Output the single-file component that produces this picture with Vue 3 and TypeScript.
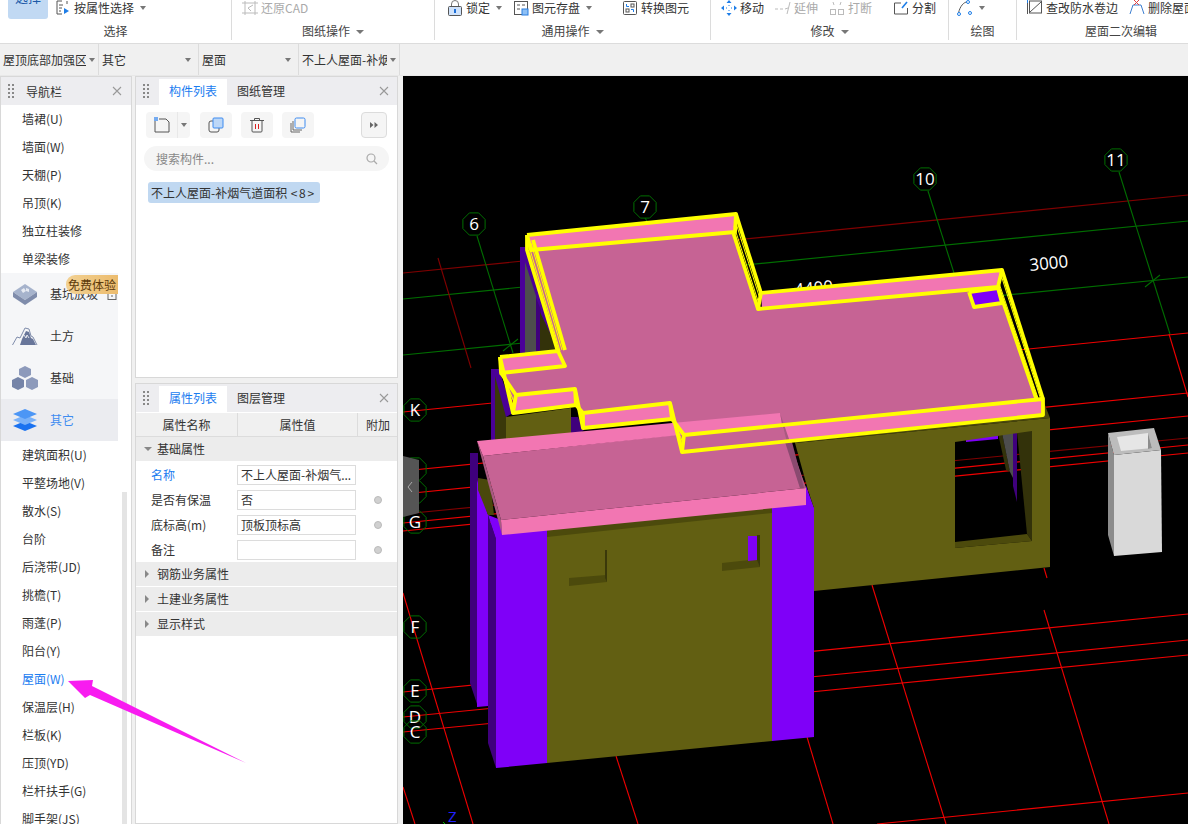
<script setup lang="ts">
interface Face { pts: string; fill: string }
interface Seg { p: number[]; c: string }
interface Axis { x: number; y: number; t: string }

const RED = '#f00000'
const DARK = '#800000'
const GREEN = '#006e00'

const lines: Seg[] = [
  { p: [403, 273, 1188, 195], c: DARK },
  { p: [403, 299, 1188, 221], c: GREEN },
  { p: [403, 355, 1188, 277], c: GREEN },
  { p: [403, 412, 1188, 333], c: RED },
  { p: [403, 471, 1188, 393], c: RED },
  { p: [403, 494, 1188, 416], c: RED },
  { p: [403, 514, 1188, 438], c: DARK },
  { p: [403, 523, 1188, 445], c: RED },
  { p: [403, 531, 1188, 453], c: RED },
  { p: [403, 692, 1188, 614], c: RED },
  { p: [403, 717, 1188, 640], c: RED },
  { p: [403, 732, 1188, 655], c: RED },
  { p: [877, 824, 1188, 793], c: RED },
  { p: [403, 593, 473, 824], c: RED },
  { p: [403, 787, 415, 824], c: RED },
  { p: [616, 756, 638, 824], c: RED },
  { p: [807, 737, 833, 824], c: RED },
  { p: [872, 585, 946, 824], c: RED },
  { p: [1044, 568, 1047, 578], c: RED },
  { p: [1044, 610, 1109, 824], c: RED },
  { p: [1169, 334, 1188, 397], c: RED },
  { p: [438, 258, 471, 368], c: DARK },
  { p: [477, 236, 513, 353], c: GREEN },
  { p: [645, 218, 650, 226], c: GREEN },
  { p: [928, 191, 954, 273], c: GREEN },
  { p: [1119, 172, 1170, 334], c: GREEN },
  { p: [503, 351, 518, 339], c: GREEN },
  { p: [1145, 287, 1160, 275], c: GREEN },
]

const axes: Axis[] = [
  { x: 474, y: 224, t: '6' },
  { x: 645, y: 207, t: '7' },
  { x: 925, y: 179, t: '10' },
  { x: 1116, y: 160, t: '11' },
  { x: 415, y: 410, t: 'K' },
  { x: 415, y: 469, t: '' },
  { x: 415, y: 492, t: 'I' },
  { x: 415, y: 522, t: 'G' },
  { x: 415, y: 627, t: 'F' },
  { x: 415, y: 691, t: 'E' },
  { x: 415, y: 717, t: 'D' },
  { x: 415, y: 732, t: 'C' },
]

function octagon(a: Axis): string {
  const pts: string[] = []
  for (let i = 0; i < 8; i++) {
    const ang = Math.PI / 8 + (i * Math.PI) / 4
    pts.push(`${(a.x + 12 * Math.cos(ang)).toFixed(1)},${(a.y + 12 * Math.sin(ang)).toFixed(1)}`)
  }
  return pts.join(' ')
}

const OLIVE = '#625f12'
const SHADE = '#4c4a0c'
const PURPLE = '#7f00f8'
const PURPLE_DK = '#3f007c'
const FLOOR = '#c66394'
const PINK = '#f276b2'

// faces behind the roof, far to near
const backFaces: Face[] = [
  { pts: '966,437 998,433 998,439 966,442', fill: PURPLE },
  { pts: '998,433 1002,433 1010,472 1006,470', fill: '#33320a' },
  { pts: '1002,433 1013,432 1013,478 1010,472', fill: '#4d4d4d' },
  { pts: '1013,432 1017,432 1017,502 1013,486', fill: PURPLE_DK },
  { pts: '1017,432 1032,430 1032,541 1027,534', fill: '#33320a' },
  { pts: '955,542 1027,534 1032,541 955,548', fill: SHADE },
  { pts: '1043,400 1050,418 795,443 790,430', fill: SHADE },
  { pts: '520,247 527,247 558,351 520,353', fill: '#4a0098' },
  { pts: '525,262 536,296 536,353 525,353', fill: '#4d4d4d' },
  { pts: '536,298 541,310 541,352 536,353', fill: PURPLE_DK },
  { pts: '540,312 558,350 540,351', fill: '#33320a' },
  { pts: '491,369 499,369 513,413 506,417 506,440 491,440', fill: '#4a0098' },
  { pts: '495,376 506,417 506,440 495,440', fill: '#3a380a' },
  { pts: '506,417 571,408 571,440 506,440', fill: OLIVE },
  { pts: '571,417 578,417 584,430 571,440', fill: PURPLE_DK },
  { pts: '470,453 478,453 478,707 470,683', fill: PURPLE_DK },
  { pts: '477,480 488,515 488,706 477,707', fill: PURPLE },
  { pts: '478,478 490,480 494,515 488,515 478,490', fill: '#4a480c' },
  { pts: '786,423 790,421 796,440 790,442', fill: PURPLE },
  { pts: '806,486 814,508 806,508', fill: PURPLE },
]

const wallPath = 'M795 443L1050 418V567L814 591V508L808 490ZM955 442V548L1032 541V431Z'

const roof: Face[] = [
  { pts: '527,250 735,232 758,309 998,287 1040,405 681,440 671,410 580,420 575,396 513,402 501,373 563,367 558,351', fill: FLOOR },
  { pts: '527,235 736,214 735,232 531,250', fill: PINK },
  { pts: '761,293 1002,270 998,287 762,309', fill: PINK },
  { pts: '684,435 1043,399 1043,415 682,452', fill: PINK },
  { pts: '516,395 575,389 576,405 513,413', fill: PINK },
  { pts: '583,413 670,403 672,419 583,428', fill: PINK },
  { pts: '500,357 558,351 565,366 501,373', fill: PINK },
  { pts: '969,292 998,288 1002,303 974,307', fill: PURPLE },
]

const frontFaces: Face[] = [
  { pts: '488,515 496,539 496,768 488,743', fill: PURPLE_DK },
  { pts: '496,533 547,527 547,763 496,768', fill: PURPLE },
  { pts: '547,528 772,504 772,741 547,763', fill: OLIVE },
  { pts: '547,528 772,504 772,513 547,537', fill: SHADE },
  { pts: '772,503 806,500 814,508 814,737 772,741', fill: PURPLE },
  { pts: '569,578 606,575 607,582 569,586', fill: SHADE },
  { pts: '605,550 607,550 607,582 605,578', fill: '#3a380a' },
  { pts: '722,563 759,559 760,567 722,571', fill: SHADE },
  { pts: '757,535 760,535 760,567 757,560', fill: '#3a380a' },
  { pts: '748,536 757,536 757,560 748,561', fill: PURPLE },
  { pts: '488,515 501,520 502,535 496,539', fill: PURPLE },
  { pts: '477,441 483,456 501,520 502,535', fill: '#a85a80' },
  { pts: '483,456 781,423 806,488 501,520', fill: FLOOR },
  { pts: '477,441 780,413 782,424 483,456', fill: PINK },
  { pts: '780,413 806,488 800,488 782,424', fill: '#a85a80' },
  { pts: '785,442 792,442 804,488 800,488', fill: '#8a4a70' },
  { pts: '501,520 806,488 806,505 502,535', fill: PINK },
]

const boxFaces: Face[] = [
  { pts: '1108,433 1114,455 1114,556 1108,535', fill: '#8c8c8c' },
  { pts: '1114,455 1161,450 1162,552 1114,556', fill: '#d9d9d9' },
  { pts: '1108,433 1154,428 1161,450 1114,455', fill: '#bcbcbc' },
  { pts: '1117,437 1148,433 1152,448 1121,451', fill: '#e6e6e6' },
  { pts: '1148,433 1152,448 1148,449', fill: '#8c8c8c' },
]

const yellowOutlines: string[] = [
  '527,235 736,214 735,232 531,250 527,235',
  '761,293 1002,270 998,287 758,309 761,293',
  '684,435 1043,399 1043,415 682,452 684,435',
  '516,395 575,389 576,405 513,413 516,395',
  '583,413 670,403 672,419 583,428 583,413',
  '500,357 558,351 565,366 501,373 500,357',
  '969,292 998,288 1002,303 974,307 969,292',
  '527,235 527,250 558,352',
  '533,240 565,350',
  '736,214 761,293',
  '733,232 758,309',
  '1002,270 1043,399',
  '998,287 1037,401',
  '500,357 513,413',
  '501,373 516,395',
  '575,389 583,428',
  '576,405 583,413',
  '670,403 682,452',
  '672,419 684,435',
]

const yellowThin: string[] = [
  '529,246 560,351',
  '531,243 562,350',
  '735,220 760,299',
  '734,226 759,304',
  '1001,275 1041,400',
  '999,283 1039,401',
  '507,385 515,404',
  '504,380 514,408',
  '579,408 583,420',
  '676,426 683,443',
  '673,414 681,447',
]

const navTop = ['墙裙(U)', '墙面(W)', '天棚(P)', '吊顶(K)', '独立柱装修', '单梁装修']
const navBottom = ['建筑面积(U)', '平整场地(V)', '散水(S)', '台阶', '后浇带(JD)', '挑檐(T)', '雨蓬(P)', '阳台(Y)', '屋面(W)', '保温层(H)', '栏板(K)', '压顶(YD)', '栏杆扶手(G)', '脚手架(JS)']

const selects = ['屋顶底部加强区', '其它', '屋面', '不上人屋面-补烟气道面积']

const props = [
  { name: '名称', value: '不上人屋面-补烟气...', dot: false, active: true },
  { name: '是否有保温', value: '否', dot: true, active: false },
  { name: '底标高(m)', value: '顶板顶标高', dot: true, active: false },
  { name: '备注', value: '', dot: true, active: false },
]
</script>

<template>
  <div class="app">
    <svg class="defs" width="0" height="0">
      <symbol id="grip" viewBox="0 0 6 14">
        <rect v-for="n in 4" :key="'a' + n" x="0" :y="(n - 1) * 4" width="2" height="2" fill="#888" />
        <rect v-for="n in 4" :key="'b' + n" x="4" :y="(n - 1) * 4" width="2" height="2" fill="#888" />
      </symbol>
      <symbol id="close" viewBox="0 0 10 10">
        <path d="M1 1l8 8M9 1l-8 8" stroke="#999" stroke-width="1.1" fill="none" />
      </symbol>
    </svg>

    <header class="ribbon">
      <section class="group" style="width: 232px">
        <div class="row">
          <div class="big-btn"><span>选择</span></div>
          <div class="tool">
            <svg width="16" height="16" viewBox="0 0 16 16" fill="none">
              <path d="M7 1H2v13h5M4 5h4M4 8h3M4 11h2M12 1v3" stroke="#555" />
              <path d="M9 8l5 3-5 3z" fill="#1e7ee8" />
            </svg>
            按属性选择<i class="caret"></i>
          </div>
        </div>
        <div class="label">选择</div>
      </section>

      <section class="group" style="width: 203px">
        <div class="row pad-243">
          <div class="tool off">
            <svg width="16" height="16" viewBox="0 0 16 16" fill="none" stroke="#bbb">
              <path d="M3 1v14M13 1v14M0 3h16M0 13h16M11 5L6 8l3 3" />
            </svg>
            还原CAD
          </div>
        </div>
        <div class="label">图纸操作<i class="caret wide"></i></div>
      </section>

      <section class="group" style="width: 276px">
        <div class="row pad-448">
          <div class="tool gap-25">
            <svg width="16" height="16" viewBox="0 0 16 16" fill="none">
              <path d="M4.500 7V4a3.500 3.500 0 017 0v3" stroke="#777" />
              <rect x="1.500" y="6.500" width="13" height="9" rx="1" fill="#cfe2fa" stroke="#555" />
              <path d="M8 9v4" stroke="#1e6fd8" stroke-width="2" />
            </svg>
            锁定<i class="caret"></i>
          </div>
          <div class="tool gap-52">
            <svg width="16" height="16" viewBox="0 0 16 16" fill="none" stroke="#555">
              <rect x="1.500" y="1.500" width="13" height="13" />
              <path d="M4 5h3M4 9h3M9 5h3" />
              <rect x="9" y="9" width="6" height="6" fill="#8ec0f5" stroke="#2a7ee0" />
            </svg>
            图元存盘<i class="caret"></i>
          </div>
          <div class="tool">
            <svg width="16" height="16" viewBox="0 0 16 16" fill="none" stroke="#555">
              <rect x="1.500" y="1.500" width="13" height="13" rx="1" />
              <rect x="4" y="9" width="3" height="3" />
              <rect x="9" y="4" width="3" height="3" />
              <path d="M7 6.500H4.500V4M9 9.500h2.500V12" stroke="#1e7ee8" />
            </svg>
            转换图元
          </div>
        </div>
        <div class="label">通用操作<i class="caret wide"></i></div>
      </section>

      <section class="group" style="width: 238px">
        <div class="row pad-722">
          <div class="tool gap-12">
            <svg width="16" height="16" viewBox="0 0 16 16" fill="#1e7ee8">
              <path d="M8 0l2.500 3h-5zM8 16l-2.500-3h5zM0 8l3-2.500v5zM16 8l-3 2.500v-5z" />
              <path d="M8 5v1M8 10v1M5 8h1M10 8h1" stroke="#1e7ee8" />
            </svg>
            移动
          </div>
          <div class="tool off gap-15">
            <svg width="16" height="16" viewBox="0 0 16 16" fill="none" stroke="#bbb">
              <path d="M0 9h3M5 9h3M10 9l3-1M12 14l3-12" />
            </svg>
            延伸
          </div>
          <div class="tool off gap-24">
            <svg width="16" height="16" viewBox="0 0 16 16" fill="none" stroke="#bbb">
              <path d="M4 2l1 3M12 2l-1 3" />
              <rect x="1.500" y="9.500" width="5" height="5" />
              <rect x="9.500" y="9.500" width="5" height="5" />
            </svg>
            打断
          </div>
          <div class="tool">
            <svg width="16" height="16" viewBox="0 0 16 16" fill="none">
              <path d="M8 3H1.500v11h13V8" stroke="#555" />
              <path d="M9 8l5-6" stroke="#1e7ee8" stroke-width="1.600" />
            </svg>
            分割
          </div>
        </div>
        <div class="label">修改<i class="caret wide"></i></div>
      </section>

      <section class="group" style="width: 68px">
        <div class="row pad-958">
          <div class="tool">
            <svg width="16" height="16" viewBox="0 0 16 16" fill="none">
              <path d="M1.500 13C3 6 7 2 10 2" stroke="#555" />
              <circle cx="2" cy="14" r="1.500" fill="#fff" stroke="#1e7ee8" />
              <circle cx="11" cy="2" r="1.500" fill="#fff" stroke="#1e7ee8" />
              <circle cx="13" cy="13" r="1.500" fill="#fff" stroke="#1e7ee8" />
            </svg>
            <i class="caret"></i>
          </div>
        </div>
        <div class="label">绘图</div>
      </section>

      <section class="group last" style="width: 208px">
        <div class="row pad-1028">
          <div class="tool gap-10">
            <svg width="16" height="16" viewBox="0 0 16 16" fill="none">
              <rect x="2.500" y="1" width="12" height="12" stroke="#555" />
              <path d="M3 12l11-10M0.500 1v13" stroke="#555" />
              <path d="M0.500 0v3" stroke="#1e7ee8" />
            </svg>
            查改防水卷边
          </div>
          <div class="tool">
            <svg width="16" height="16" viewBox="0 0 16 16" fill="none">
              <path d="M1 14L4 5h8l3 9" stroke="#3d7fd0" />
              <path d="M5 0l5 5M10 0L5 5" stroke="#e04040" />
            </svg>
            删除屋面卷边
          </div>
        </div>
        <div class="label">屋面二次编辑</div>
      </section>
    </header>

    <div class="selects">
      <div v-for="s in selects" :key="s" class="select">
        <span class="select-text">{{ s }}</span><i class="caret"></i>
      </div>
    </div>

    <main class="body">
      <aside class="nav panel">
        <div class="panel-head">
          <svg class="grip"><use href="#grip" /></svg>
          <span class="nav-title">导航栏</span>
          <svg class="close"><use href="#close" /></svg>
        </div>
        <div class="nav-body">
          <div v-for="n in navTop" :key="n" class="nav-item">{{ n }}</div>

          <div class="nav-group">
            <svg width="26" height="22" viewBox="0 0 26 22">
              <path d="M13 1l12 8-12 8L1 9z" fill="#a6b3cc" />
              <path d="M1 9l12 8v5L1 14zM25 9l-12 8v5l12-8z" fill="#7f8cab" />
              <path d="M9 7l3-2 2 3-3 2zM14 5l3 1v3l-3-1z" fill="#e6eaf2" />
            </svg>
            <span>基坑放坡</span>
            <svg class="lock" width="10" height="11" viewBox="0 0 10 11" fill="none" stroke="#666">
              <rect x="1" y="4" width="8" height="6.500" />
              <path d="M3 4V2a2 2 0 014 0v2M5 6v2" />
            </svg>
            <em class="trial">免费体验</em>
          </div>
          <div class="nav-group">
            <svg width="26" height="20" viewBox="0 0 26 20">
              <path d="M0.500 19L5 11l3 1 5-10 4 1 2 7 2 1 4 8" fill="none" stroke="#7f8cab" />
              <path d="M8 19l2-6 4-8 3 1 2 6 2 1 3 6z" fill="#68769a" />
              <path d="M12 9l2 3 1-3 2 3" fill="none" stroke="#fff" stroke-width=".8" />
            </svg>
            <span>土方</span>
          </div>
          <div class="nav-group">
            <svg width="26" height="24" viewBox="0 0 26 24">
              <path d="M13 0l6 3v6l-6 3-6-3V3z" fill="#8d9abb" />
              <path d="M6 11l6 3v7l-6 3-6-3v-7z" fill="#7584a8" />
              <path d="M20 11l6 3v7l-6 3-6-3v-7z" fill="#8d9abb" />
            </svg>
            <span>基础</span>
          </div>
          <div class="nav-group on">
            <svg width="26" height="22" viewBox="0 0 26 22">
              <path d="M13 12l12 5-12 5L1 17z" fill="#1a72f0" />
              <path d="M13 6l12 5-12 5L1 11z" fill="#79b1f8" />
              <path d="M13 0l12 5-12 5L1 5z" fill="#4c96f5" />
            </svg>
            <span>其它</span>
          </div>

          <div v-for="n in navBottom" :key="n" class="nav-item" :class="{ on: n === '屋面(W)' }">{{ n }}</div>
        </div>
        <div class="scrollbar"></div>
      </aside>

      <div class="middle">
        <section class="panel list">
          <div class="panel-head">
            <svg class="grip"><use href="#grip" /></svg>
            <span class="tab on">构件列表</span>
            <span class="tab">图纸管理</span>
            <svg class="close"><use href="#close" /></svg>
          </div>
          <div class="toolbar">
            <div class="tbtn split">
              <span class="tbtn-main">
                <svg width="16" height="16" viewBox="0 0 16 16" fill="none">
                  <path d="M1 4v11h14V5l-3-3H5" stroke="#555" />
                  <path d="M0 0h4v4H0z" fill="#3d8bf0" opacity=".7" />
                </svg>
              </span>
              <span class="tbtn-arrow"><i class="caret"></i></span>
            </div>
            <div class="tbtn">
              <svg width="16" height="16" viewBox="0 0 16 16" fill="none">
                <rect x="1" y="4" width="10" height="11" rx="2" stroke="#555" />
                <rect x="5" y="1" width="10" height="10" rx="1" fill="#bcd7f7" stroke="#3d8bf0" />
              </svg>
            </div>
            <div class="tbtn">
              <svg width="16" height="16" viewBox="0 0 16 16" fill="none">
                <path d="M1 3.500h14M5.500 3.500V1.500h5v2M3 3.500v10.500a1 1 0 001 1h8a1 1 0 001-1V3.500" stroke="#555" />
                <path d="M6.500 7v5M9.500 7v5" stroke="#d92020" />
              </svg>
            </div>
            <div class="tbtn">
              <svg width="16" height="16" viewBox="0 0 16 16" fill="none">
                <path d="M1 6v9h9M3 4v9h9" stroke="#666" />
                <rect x="5" y="1" width="10" height="10" rx="1.500" fill="#f5f5f5" stroke="#3d8bf0" />
              </svg>
            </div>
            <div class="tbtn more">
              <svg width="8" height="6" viewBox="0 0 8 6" fill="#666"><path d="M0 0l3.500 3L0 6zM4.500 0L8 3 4.500 6z" /></svg>
            </div>
          </div>
          <div class="search">
            <span>搜索构件...</span>
            <svg width="12" height="12" viewBox="0 0 12 12" fill="none" stroke="#aaa" stroke-width="1.200">
              <circle cx="5" cy="5" r="4" />
              <path d="M8 8l3 3" />
            </svg>
          </div>
          <div class="chip">不上人屋面-补烟气道面积 <span class="count">&lt;8&gt;</span></div>
        </section>

        <section class="panel attrs">
          <div class="panel-head">
            <svg class="grip"><use href="#grip" /></svg>
            <span class="tab on">属性列表</span>
            <span class="tab">图层管理</span>
            <svg class="close"><use href="#close" /></svg>
          </div>
          <div class="thead">
            <span>属性名称</span><span>属性值</span><span>附加</span>
          </div>
          <div class="sect"><i class="tri down"></i>基础属性</div>
          <div v-for="p in props" :key="p.name" class="prop">
            <span class="prop-name" :class="{ on: p.active }">{{ p.name }}</span>
            <span class="prop-value">{{ p.value }}</span>
            <span class="prop-extra"><i v-if="p.dot" class="dot"></i></span>
          </div>
          <div class="sect"><i class="tri"></i>钢筋业务属性</div>
          <div class="sect"><i class="tri"></i>土建业务属性</div>
          <div class="sect"><i class="tri"></i>显示样式</div>
        </section>
      </div>

      <div class="viewport">
        <svg class="scene" viewBox="403 76 785 748" width="785" height="748">
          <line v-for="(l, i) in lines" :key="i" :x1="l.p[0]" :y1="l.p[1]" :x2="l.p[2]" :y2="l.p[3]" :stroke="l.c" stroke-width="1.100" />
          <text class="dim" transform="translate(795 296) rotate(-5.700)">4400</text>
          <text class="dim" transform="translate(1030 271) rotate(-5.700)">3000</text>
          <polygon v-for="f in backFaces" :key="f.pts" :points="f.pts" :fill="f.fill" />
          <path :d="wallPath" :fill="OLIVE" fill-rule="evenodd" />
          <polygon v-for="f in roof" :key="f.pts" :points="f.pts" :fill="f.fill" />
          <polygon v-for="f in frontFaces" :key="f.pts" :points="f.pts" :fill="f.fill" />
          <polygon v-for="f in boxFaces" :key="f.pts" :points="f.pts" :fill="f.fill" />
          <polyline v-for="y in yellowOutlines" :key="y" :points="y" fill="none" stroke="#ffff00" stroke-width="3.800" stroke-linejoin="round" />
          <polyline v-for="y in yellowThin" :key="y" :points="y" fill="none" stroke="#ffff00" stroke-width="1" />
          <g v-for="a in axes" :key="a.x + '-' + a.y">
            <polygon :points="octagon(a)" fill="none" :stroke="GREEN" />
            <text class="axis" :x="a.x" :y="a.y + 6">{{ a.t }}</text>
          </g>
          <path d="M403 456l16 4v53l-16 4z" fill="#555" />
          <path d="M412 482l-4 5 4 5" fill="none" stroke="#aaa" />
          <text class="z" x="448" y="822">Z</text>
          <path d="M443 822l2 2" stroke="#00c000" fill="none" />
        </svg>
      </div>
    </main>

    <svg class="arrow" width="260" height="110" viewBox="0 660 260 110">
      <path d="M68 681L93 680 92 686 246 763 90 695 85 698z" fill="#f81cf0" />
    </svg>
  </div>
</template>

<style scoped>
.app {
  position: relative;
  width: 1188px;
  height: 824px;
  overflow: hidden;
  background: #f0f0f0;
  color: #333;
  font: 12px/16px "Noto Sans CJK SC", "Liberation Sans", sans-serif;
}

.defs {
  position: absolute;
}

i {
  font-style: normal;
}

.ribbon {
  display: flex;
  height: 44px;
  box-sizing: border-box;
  background: #fff;
  border-bottom: 1px solid #dcdcdc;
}

.group {
  flex: none;
  height: 40px;
  box-sizing: border-box;
  border-right: 1px solid #dcdcdc;
}

.group.last {
  border-right: 0;
}

.row {
  display: flex;
  align-items: center;
  height: 16px;
  padding-left: 11px;
}

.group:first-child .row {
  padding-left: 8px;
}

.pad-243 {
  padding-left: 10px;
}

.pad-448 {
  padding-left: 12px;
}

.pad-722 {
  padding-left: 10px;
}

.pad-958 {
  padding-left: 8px;
}

.pad-1028 {
  padding-left: 10px;
}

.big-btn {
  width: 40px;
  height: 19px;
  align-self: flex-start;
  margin-right: 7px;
  background: #c1d9f3;
  border-radius: 0 0 3px 3px;
  overflow: hidden;
  color: #1c5aa8;
  text-align: center;
  font-size: 13px;
  line-height: 8px;
}

.big-btn span {
  display: block;
  margin-top: -7px;
}

.tool {
  display: flex;
  align-items: center;
  gap: 3px;
  white-space: nowrap;
}

.tool.off {
  color: #aaa;
}

.gap-25 {
  margin-right: 11px;
}

.gap-52 {
  margin-right: 30px;
}

.gap-12 {
  margin-right: 11px;
}

.gap-15 {
  margin-right: 11px;
}

.gap-24 {
  margin-right: 21px;
}

.gap-10 {
  margin-right: 11px;
}

.caret {
  display: inline-block;
  width: 0;
  height: 0;
  margin-left: 3px;
  border: 3px solid transparent;
  border-top: 4px solid #777;
  border-bottom: 0;
}

.caret.wide {
  margin-left: 6px;
  border-width: 4px;
  border-bottom: 0;
  vertical-align: 2px;
}

.label {
  margin-top: 7px;
  text-align: center;
  color: #444;
  line-height: 16px;
}

.selects {
  display: flex;
  height: 32px;
  box-sizing: border-box;
  border-bottom: 1px solid #e8e8e8;
}

.select {
  flex: none;
  display: flex;
  align-items: center;
  justify-content: space-between;
  width: 100px;
  box-sizing: border-box;
  padding: 0 7px 0 3px;
  border-right: 1px solid #dcdcdc;
}

.select:first-child {
  width: 99px;
  padding-right: 3px;
}

.select:last-child {
  width: 101px;
  padding-right: 3px;
}

.select-text {
  flex: 1;
  overflow: hidden;
  white-space: nowrap;
}

.body {
  display: flex;
  height: 748px;
}

.panel {
  background: #fff;
  box-sizing: border-box;
  border: 1px solid #d8d8d8;
}

.panel-head {
  position: relative;
  display: flex;
  align-items: flex-end;
  height: 28px;
  background: #ededf0;
  font-size: 12px;
}

.grip {
  position: absolute;
  left: 7px;
  top: 7px;
  width: 6px;
  height: 14px;
}

.close {
  position: absolute;
  right: 9px;
  top: 9px;
  width: 10px;
  height: 10px;
}

.list .close,
.attrs .close {
  right: 8px;
}

.nav {
  position: relative;
  flex: none;
  width: 132px;
  overflow: hidden;
  border-width: 1px 1px 0;
}

.nav-title {
  margin: 0 0 5px 25px;
}

.nav-body {
  width: 117px;
  background: #fff;
}

.nav-item {
  height: 28px;
  padding-left: 21px;
  line-height: 28px;
  white-space: nowrap;
}

.nav-item.on {
  color: #1a7cf0;
}

.nav-group {
  position: relative;
  display: flex;
  align-items: center;
  height: 42px;
  padding-left: 11px;
  background: #f5f6f8;
}

.nav-group svg {
  flex: none;
}

.nav-group span {
  position: absolute;
  left: 49px;
}

.nav-group.on {
  background: #ebecf0;
}

.nav-group.on span {
  color: #3f8cf0;
}

.nav-group .lock {
  position: absolute;
  right: 1px;
  top: 16px;
}

.trial {
  position: absolute;
  right: 0;
  top: 2px;
  width: 52px;
  height: 19px;
  border-radius: 9px 0 0 9px;
  background: linear-gradient(90deg, #f2d193, #ecbc6e);
  color: #5c3a0a;
  font-style: normal;
  line-height: 19px;
  text-align: center;
}

.scrollbar {
  position: absolute;
  left: 121px;
  top: 415px;
  width: 5px;
  height: 340px;
  background: #e4e4e4;
}

.middle {
  flex: none;
  width: 263px;
  margin: 0 5px 0 3px;
  display: flex;
  flex-direction: column;
}

.list {
  height: 302px;
}

.attrs {
  flex: 1;
  margin-top: 5px;
}

.tab {
  width: 68px;
  height: 26px;
  line-height: 24px;
  text-align: center;
}

.tab.on {
  margin-left: 23px;
  background: #fff;
  color: #1a7cf0;
}

.toolbar {
  display: flex;
  gap: 9px;
  padding: 7px 10px 0;
}

.tbtn {
  display: flex;
  align-items: center;
  justify-content: center;
  width: 32px;
  height: 26px;
  background: #f5f5f5;
  border-radius: 4px;
}

.tbtn.split {
  width: 44px;
  margin-right: 1px;
}

.tbtn-main {
  display: flex;
  align-items: center;
  justify-content: center;
  width: 32px;
  height: 26px;
  border-right: 1px solid #e8e8e8;
}

.tbtn-arrow {
  display: flex;
  justify-content: center;
  width: 12px;
}

.tbtn-arrow .caret {
  margin: 0;
}

.tbtn.more {
  width: 26px;
  margin-left: auto;
  box-sizing: border-box;
  border: 1px solid #dcdcdc;
}

.search {
  display: flex;
  align-items: center;
  justify-content: space-between;
  height: 25px;
  margin: 8px 8px 0;
  padding: 0 11px 0 12px;
  background: #f5f5f5;
  border-radius: 13px;
  color: #888;
}

.chip {
  width: fit-content;
  height: 21px;
  margin: 11px 0 0 12px;
  padding: 0 4px 0 3px;
  background: #c0d8f1;
  border-radius: 3px;
  line-height: 21px;
  white-space: nowrap;
}

.count {
  margin-left: 1px;
  letter-spacing: 1.600px;
}

.thead {
  display: grid;
  grid-template-columns: 101px 120px 41px;
  height: 24px;
  margin-top: 1px;
  background: #f0f0f0;
  border-bottom: 1px solid #dcdcdc;
  line-height: 23px;
  text-align: center;
  box-sizing: border-box;
}

.thead span + span {
  border-left: 1px solid #dcdcdc;
}

.sect {
  position: relative;
  height: 24px;
  margin-bottom: 1px;
  background: #ececec;
  padding-left: 21px;
  line-height: 24px;
}

.tri {
  position: absolute;
  left: 9px;
  top: 8px;
  width: 0;
  height: 0;
  border: 4px solid transparent;
  border-left: 4px solid #888;
  border-right: 0;
}

.tri.down {
  left: 8px;
  top: 10px;
  border: 4px solid transparent;
  border-top: 4px solid #888;
  border-bottom: 0;
}

.prop {
  display: grid;
  grid-template-columns: 101px 120px 41px;
  align-items: center;
  height: 25px;
}

.prop-name {
  padding-left: 15px;
}

.prop-name.on {
  color: #1a7cf0;
}

.prop-value {
  height: 20px;
  box-sizing: border-box;
  padding: 0 3px;
  margin-right: 1px;
  border: 1px solid #dcdcdc;
  line-height: 18px;
  white-space: nowrap;
  overflow: hidden;
}

.prop-extra {
  display: flex;
  justify-content: center;
}

.dot {
  width: 8px;
  height: 8px;
  box-sizing: border-box;
  background: #d0d0d0;
  border: 1px solid #bbb;
  border-radius: 50%;
}

.viewport {
  flex: 1;
  background: #000;
  overflow: hidden;
}

.scene {
  display: block;
}

.dim {
  fill: #fff;
  font: 17px "Open Sans", sans-serif;
}

.axis {
  fill: #fff;
  font: 17px "Open Sans", sans-serif;
  text-anchor: middle;
}

.z {
  fill: #2020ff;
  font: 15px "Open Sans", sans-serif;
}

.arrow {
  position: absolute;
  left: 0;
  top: 660px;
  pointer-events: none;
}
</style>

<style>
html,
body {
  margin: 0;
  background: #f0f0f0;
}
</style>
